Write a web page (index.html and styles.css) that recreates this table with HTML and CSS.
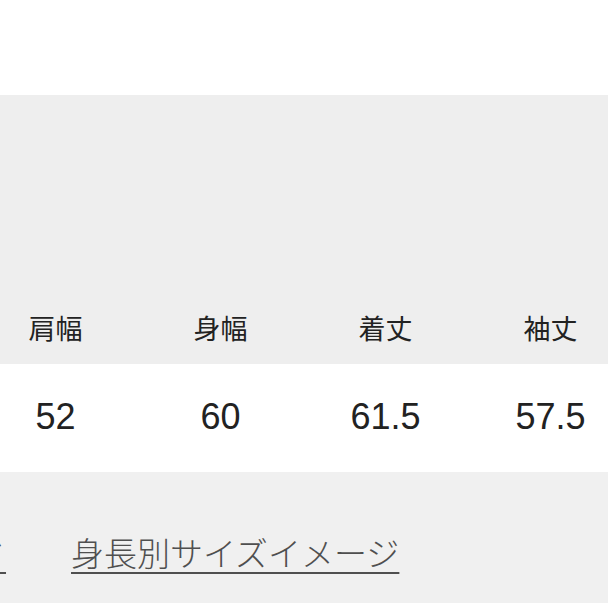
FILE: index.html
```html
<!DOCTYPE html>
<html lang="ja">
<head>
<meta charset="utf-8">
<link rel="stylesheet" href="styles.css">
</head>
<body>
<div class="top"></div>
<div class="table">
  <div class="row head">
    <div class="cell">肩幅</div>
    <div class="cell">身幅</div>
    <div class="cell">着丈</div>
    <div class="cell">袖丈</div>
  </div>
  <div class="row data">
    <div class="cell">52</div>
    <div class="cell">60</div>
    <div class="cell">61.5</div>
    <div class="cell">57.5</div>
  </div>
</div>
<div class="links">
  <a class="link">サイズガイド</a>
  <a class="link">身長別サイズイメージ</a>
</div>
<div class="bottom"></div>
</body>
</html>
```
FILE: styles.css
```css
html, body {
  margin: 0;
  padding: 0;
  background: #ffffff;
  overflow: hidden;
}
.top {
  height: 95px;
  background: #ffffff;
}
.table {
  margin-left: -27px;
}
.row {
  display: grid;
  grid-template-columns: repeat(4, 165px);
}
.head {
  height: 269px;
  background: #eeeeee;
  align-items: end;
}
.head .cell {
  font-family: "Noto Sans CJK JP", sans-serif;
  font-size: 27px;
  line-height: 27px;
  color: #222222;
  text-align: center;
  padding-bottom: 23px;
}
.data {
  height: 108px;
  background: #ffffff;
  align-items: center;
}
.data .cell {
  font-family: "Liberation Sans", Arial, sans-serif;
  font-size: 36px;
  line-height: 36px;
  color: #222222;
  text-align: center;
  padding-bottom: 2px;
}
.links {
  height: 131px;
  box-sizing: border-box;
  padding-top: 64px;
  background: #f0f0f0;
  display: flex;
  align-items: flex-start;
  gap: 65px;
  margin-left: -191px;
}
.link {
  font-family: "Noto Sans CJK JP", sans-serif;
  font-size: 33px;
  font-weight: 300;
  line-height: 33px;
  color: #4f4f4f;
  text-decoration: underline;
  text-decoration-thickness: 2px;
  text-underline-offset: 6px;
  white-space: nowrap;
}
.bottom {
  height: 5px;
  background: #ffffff;
}
```
